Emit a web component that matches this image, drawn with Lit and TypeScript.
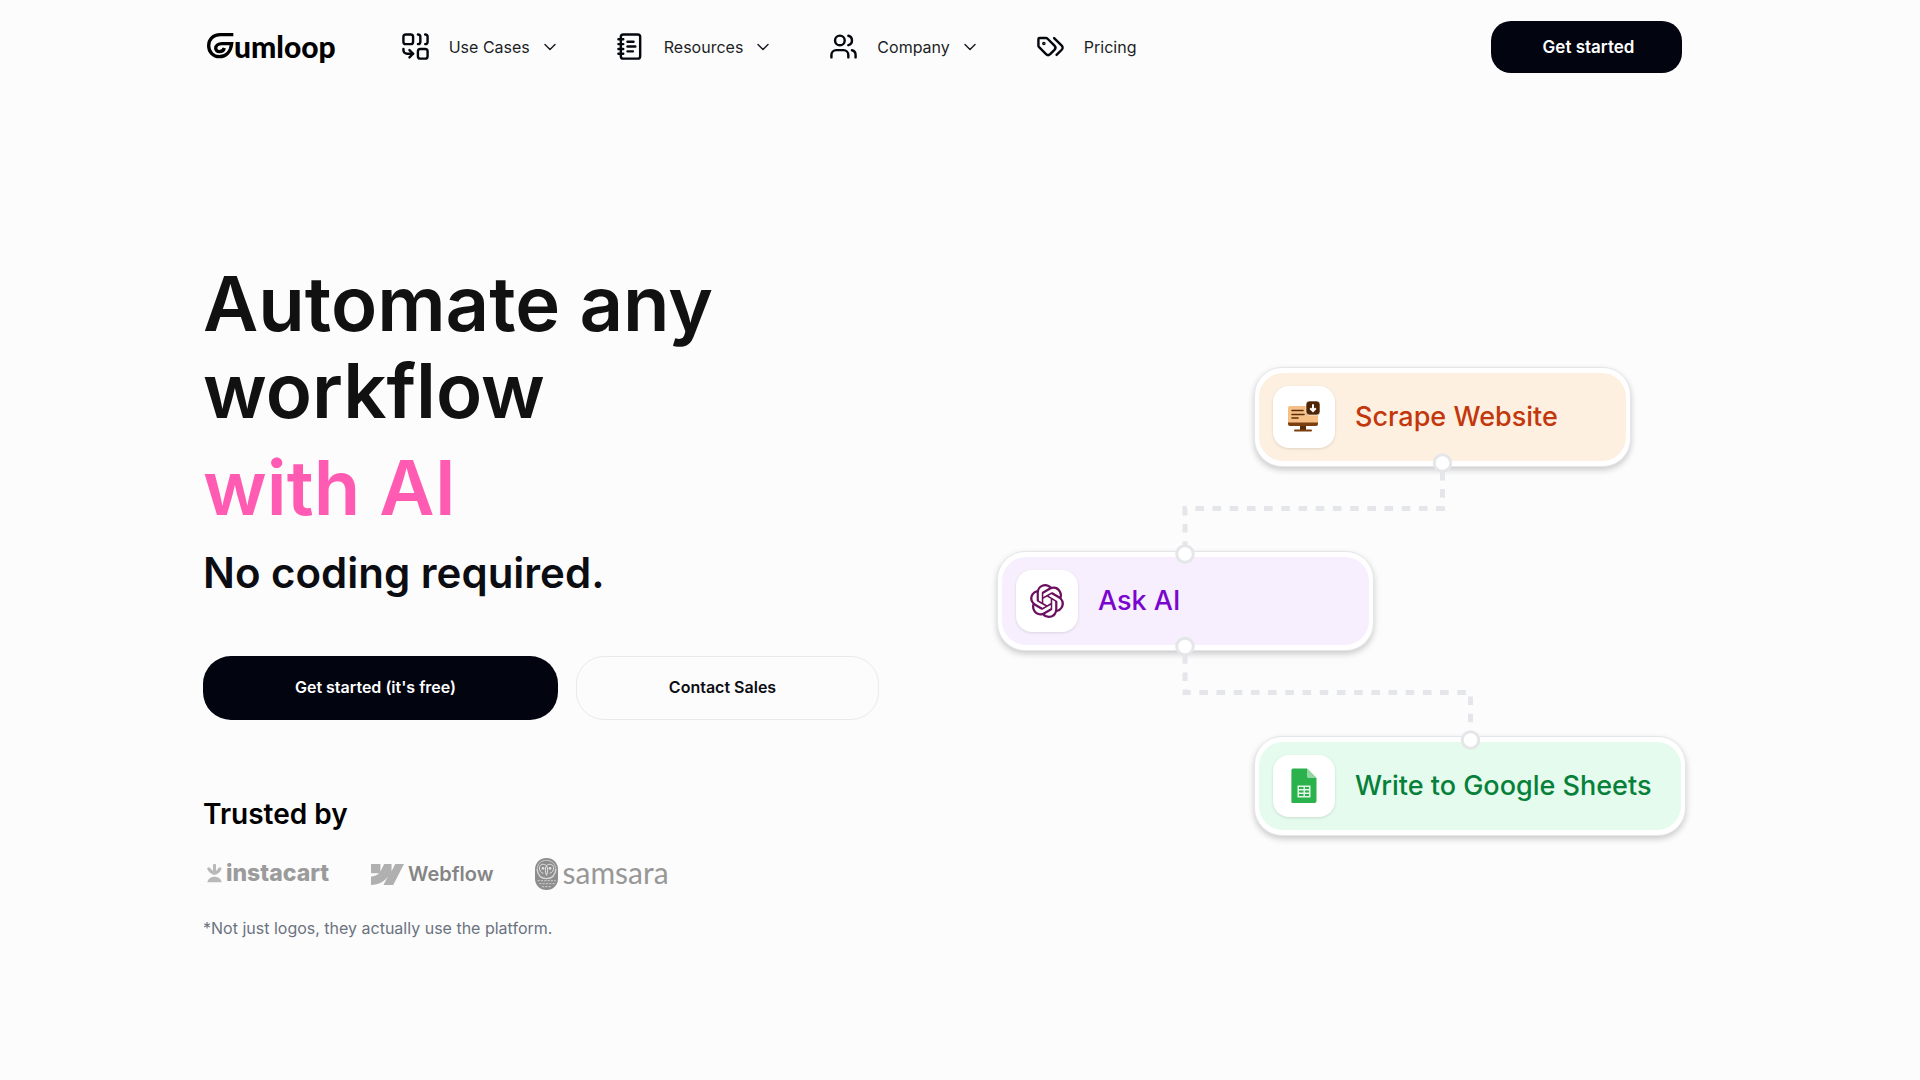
import { LitElement, html, svg, css } from "lit";
import { customElement, property } from "lit/decorators.js";

const navIcons: Record<string, unknown> = {
  combine: svg`<path d="M10 18H5a3 3 0 0 1-3-3v-1"/><path d="M14 2a2 2 0 0 1 2 2v4a2 2 0 0 1-2 2"/><path d="M20 2a2 2 0 0 1 2 2v4a2 2 0 0 1-2 2"/><path d="m7 21 3-3-3-3"/><rect x="14" y="14" width="8" height="8" rx="2"/><rect x="2" y="2" width="8" height="8" rx="2"/>`,
  notebook: svg`<path d="M2 6h4M2 10h4M2 14h4M2 18h4"/><rect width="16" height="20" x="4" y="2" rx="2"/><path d="M9.5 8h5M9.5 12H16M9.5 16H14"/>`,
  users: svg`<path d="M16 21v-2a4 4 0 0 0-4-4H6a4 4 0 0 0-4 4v2"/><circle cx="9" cy="7" r="4"/><path d="M22 21v-2a4 4 0 0 0-3-3.87"/><path d="M16 3.13a4 4 0 0 1 0 7.75"/>`,
  tags: svg`<path d="m15 5 6.3 6.3a2.4 2.4 0 0 1 0 3.4L17 19"/><path d="M9.586 5.586A2 2 0 0 0 8.172 5H3a1 1 0 0 0-1 1v5.172a2 2 0 0 0 .586 1.414L8.29 18.29a2.426 2.426 0 0 0 3.42 0l3.58-3.58a2.426 2.426 0 0 0 0-3.42z"/><circle cx="6.5" cy="9.5" r=".5" fill="currentColor"/>`,
  chevron: svg`<path d="m6 9 6 6 6-6"/>`,
};

const scrapeIcon = html`<svg width="34" height="34" viewBox="0 0 34 34" aria-hidden="true">
  <path d="M3 6h26a2 2 0 0 1 2 2v15H1V8a2 2 0 0 1 2-2z" fill="#f6bf86"/>
  <path d="M1 22.500h30v1.500a2 2 0 0 1-2 2H3a2 2 0 0 1-2-2z" fill="#7c3f10"/>
  <path d="M13 26h6v4h-6z" fill="#5a2c08"/>
  <path d="M8 30.500h16" stroke="#7c3f10" stroke-width="2" stroke-linecap="round"/>
  <path d="M5 10.500h11M5 14.500h12M5 18h6" stroke="#5a2c08" stroke-width="1.600" stroke-linecap="round"/>
  <rect x="19" y="1" width="14" height="14" rx="3.500" fill="#4d2505" stroke="#fff" stroke-width=".6"/>
  <path d="M26 4.200v6.200M23.200 8.200 26 11l2.800-2.800" fill="none" stroke="#fff" stroke-width="2"/>
</svg>`;

const aiIcon = html`<svg width="34" height="34" viewBox="0 0 24 24" fill="#6b0f5e" aria-hidden="true">
  <path d="M22.2819 9.8211a5.9847 5.9847 0 0 0-.5157-4.9108 6.0462 6.0462 0 0 0-6.5098-2.9A6.0651 6.0651 0 0 0 4.9807 4.1818a5.9847 5.9847 0 0 0-3.9977 2.9 6.0462 6.0462 0 0 0 .7427 7.0966 5.98 5.98 0 0 0 .511 4.9107 6.051 6.051 0 0 0 6.5146 2.9001A5.9847 5.9847 0 0 0 13.2599 24a6.0557 6.0557 0 0 0 5.7718-4.2058 5.9894 5.9894 0 0 0 3.9977-2.9001 6.0557 6.0557 0 0 0-.7475-7.0729zm-9.022 12.6081a4.4755 4.4755 0 0 1-2.8764-1.0408l.1419-.0804 4.7783-2.7582a.7948.7948 0 0 0 .3927-.6813v-6.7369l2.02 1.1686a.071.071 0 0 1 .038.052v5.5826a4.504 4.504 0 0 1-4.4945 4.4944zm-9.6607-4.1254a4.4708 4.4708 0 0 1-.5346-3.0137l.142.0852 4.783 2.7582a.7712.7712 0 0 0 .7806 0l5.8428-3.3685v2.3324a.0804.0804 0 0 1-.0332.0615L9.74 19.9502a4.4992 4.4992 0 0 1-6.1408-1.6464zM2.3408 7.8956a4.485 4.485 0 0 1 2.3655-1.9728V11.6a.7664.7664 0 0 0 .3879.6765l5.8144 3.3543-2.0201 1.1685a.0757.0757 0 0 1-.071 0l-4.8303-2.7865A4.504 4.504 0 0 1 2.3408 7.872zm16.5963 3.8558L13.1038 8.364 15.1192 7.2a.0757.0757 0 0 1 .071 0l4.8303 2.7913a4.4944 4.4944 0 0 1-.6765 8.1042v-5.6772a.79.79 0 0 0-.407-.667zm2.0107-3.0231l-.142-.0852-4.7735-2.7818a.7759.7759 0 0 0-.7854 0L9.409 9.2297V6.8974a.0662.0662 0 0 1 .0284-.0615l4.8303-2.7866a4.4992 4.4992 0 0 1 6.6802 4.66zM8.3065 12.863l-2.02-1.1638a.0804.0804 0 0 1-.038-.0567V6.0742a4.4992 4.4992 0 0 1 7.3757-3.4537l-.142.0805L8.704 5.459a.7948.7948 0 0 0-.3927.6813zm1.0976-2.3654l2.602-1.4998 2.6069 1.4998v2.9994l-2.5974 1.4997-2.6067-1.4997Z"/>
</svg>`;

const sheetsIcon = html`<svg width="26" height="36" viewBox="0 0 26 36" aria-hidden="true">
  <path d="M2 .5h14L25.500 10v23a2 2 0 0 1-2 2H2a1.600 1.600 0 0 1-1.600-2V2A1.600 1.600 0 0 1 2 .5z" fill="#2bb24c"/>
  <path d="M16 .5 25.500 10H17.500A1.500 1.500 0 0 1 16 8.500z" fill="#93d8a4"/>
  <path d="M6.500 17.500h13v12h-13z" fill="#e2f5e6"/>
  <path d="M8 20h4.500M14 20h4M8 23.500h4.500M14 23.500h4M8 27h4.500M14 27h4" stroke="#2bb24c" stroke-width="1.900"/>
</svg>`;

@customElement("nav-icon")
export class NavIcon extends LitElement {
  @property() name = "";
  @property({ type: Number }) size = 29;
  @property({ type: Number }) weight = 2;
  static styles = css`
    :host { display: flex; flex: none; }
    .glyph { display: block; }
  `;
  render() {
    return html`<svg class="glyph" width=${this.size} height=${this.size} viewBox="0 0 24 24" fill="none" stroke="currentColor"
      stroke-width=${this.weight} stroke-linecap="round" stroke-linejoin="round" aria-hidden="true">${navIcons[this.name]}</svg>`;
  }
}

@customElement("site-header")
export class SiteHeader extends LitElement {
  static styles = css`
    :host { display: block; }
    .bar {
      display: flex; align-items: center; gap: 65px;
      padding: 21px 238px 21px 206px;
    }
    .brand { display: flex; align-items: center; color: #000; text-decoration: none; padding-bottom: 2px; }
    .mark { display: block; }
    .word { font: 900 30px/36px Lato, "Open Sans", sans-serif; }
    .menu { display: flex; align-items: center; gap: 56px; flex: 1; }
    .item {
      display: flex; align-items: center; padding: 0; border: 0; background: none;
      font: 400 16px/24px Inter, "Liberation Sans", sans-serif; color: #1c1f26;
      text-decoration: none; cursor: pointer; white-space: nowrap;
    }
    .lead { margin: 0 19px 2px 0; color: #05070f; }
    .more { margin-left: 10px; }
    .cta {
      height: 52px; width: 191px; border: 0; border-radius: 20px; padding: 0 0 0 4px;
      background: #02040f; color: #fff; cursor: pointer;
      font: 600 17px/24px Inter, "Liberation Sans", sans-serif;
    }
  `;
  render() {
    const menus = [
      ["combine", "Use Cases"],
      ["notebook", "Resources"],
      ["users", "Company"],
    ];
    return html`<header class="bar">
      <a class="brand" href="#" aria-label="Gumloop">
        <svg class="mark" width="28" height="28" viewBox="0 0 84 84" fill="none" stroke="#000" stroke-width="10" aria-hidden="true">
          <path d="M82 8H42C21 8 8 23 8 41c0 19 14 33 32 33 20 0 34-14 37-39H48c-12 0-19 7-19 14 0 6 5 10 11 10 8 0 13-4 15-11"/>
        </svg>
        <span class="word">umloop</span>
      </a>
      <nav class="menu">
        ${menus.map(([icon, label]) => html`<button class="item" type="button">
          <nav-icon class="lead" name=${icon}></nav-icon>${label}<nav-icon class="more" name="chevron" size="20" weight="1.8"></nav-icon>
        </button>`)}
        <a class="item" href="#"><nav-icon class="lead" name="tags"></nav-icon>Pricing</a>
      </nav>
      <button class="cta" type="button">Get started</button>
    </header>`;
  }
}

@customElement("flow-canvas")
export class FlowCanvas extends LitElement {
  static styles = css`
    :host { display: block; flex: none; }
    .canvas { position: relative; width: 689px; height: 469px; }
    .node {
      position: absolute; box-sizing: border-box; width: 377px;
      padding: 5px 4px; border: 1px solid #e5e6ea; border-radius: 28px; background: #fff;
      box-shadow: 0 3px 6px rgba(0, 0, 0, 0.2);
    }
    .body {
      display: flex; align-items: center; gap: 20px; height: 88px;
      box-sizing: border-box; padding: 0 14px; border-radius: 24px;
      font: 500 27px/36px Inter, "Liberation Sans", sans-serif; white-space: nowrap;
    }
    .tile {
      display: flex; align-items: center; justify-content: center; flex: none;
      width: 62px; height: 62px; border-radius: 16px; background: #fff;
      box-shadow: 0 1px 3px rgba(0, 0, 0, 0.12);
    }
    .scrape { left: 257px; top: 1px; }
    .ask { left: 0; top: 185px; }
    .sheets { left: 257px; top: 370px; width: 432px; }
    .scrape .body { background: #fdf0e1; color: #c2370b; }
    .ask .body { background: #f7effe; color: #7a06ce; }
    .sheets .body { background: #e4fbed; color: #07803a; }
    .wires { position: absolute; inset: 0; }
  `;
  render() {
    const ports = [[445.5, 97], [188, 188], [188, 280.5], [473.5, 374]];
    return html`<div class="canvas">
      <div class="node scrape"><div class="body"><span class="tile">${scrapeIcon}</span>Scrape Website</div></div>
      <div class="node ask"><div class="body"><span class="tile">${aiIcon}</span>Ask AI</div></div>
      <div class="node sheets"><div class="body"><span class="tile">${sheetsIcon}</span>Write to Google Sheets</div></div>
      <svg class="wires" width="689" height="469" viewBox="0 0 689 469" fill="none" aria-hidden="true">
        <g stroke="#e5e6e9" stroke-width="5" stroke-dasharray="8.600 8.600">
          <path d="M445.500 105.900V142.500H188V184"/>
          <path d="M188 289.200V326.500H473.500V366"/>
        </g>
        ${ports.map(([x, y]) => svg`<circle cx=${x} cy=${y} r="8.300" fill="#fff" stroke="#e5e6ea" stroke-width="3"/>`)}
      </svg>
    </div>`;
  }
}

@customElement("customer-logos")
export class CustomerLogos extends LitElement {
  static styles = css`
    :host { display: block; }
    .row { display: flex; align-items: center; gap: 42px; padding-left: 4px; height: 32px; }
    .logo { display: flex; align-items: center; gap: 4px; white-space: nowrap; }
    .pic { display: block; flex: none; }
    .instacart { font: 800 23px/28px Inter, sans-serif; color: #9b9b9b; padding-bottom: 2px; }
    .webflow { font: 600 20px/28px Inter, sans-serif; color: #858585; }
    .samsara { font: 400 30px/28px Lato, sans-serif; color: #989898; }
    .samsara .name { padding-bottom: 4px; }
  `;
  render() {
    return html`<div class="row">
      <span class="logo instacart">
        <svg class="pic" width="15" height="19" viewBox="0 0 48 60" fill="#b9b9b9" aria-hidden="true">
          <path d="M19 4a5 5 0 0 1 10 0v18l8-10a5 5 0 0 1 8 6C42 26 34 32 24 35 14 32 6 26 2 18a5 5 0 0 1 8-6l9 10z"/>
          <path d="M1 58c2-11 11-18 23-18s21 7 23 18z"/>
        </svg>instacart</span>
      <span class="logo webflow">
        <svg class="pic" width="33" height="21" viewBox="0 0 98 62" fill="#b0b0b0" aria-hidden="true">
          <path d="M98 0 66 62H37l13-25C40 52 24 61 0 62V37s15-1 24-10H0V0h28v22L39 0h22v21L72 0z"/>
        </svg>Webflow</span>
      <span class="logo samsara">
        <svg class="pic" width="23" height="32" viewBox="0 0 69 96" aria-hidden="true">
          <rect width="69" height="96" rx="34" fill="#8d8d8d"/>
          <path d="M7 30c2-14 13-23 27-23s26 9 28 23" fill="none" stroke="#d6d6d6" stroke-width="2.500"/>
          <path d="M6 32c2 18 12 30 28.500 30S61 50 63 32" fill="none" stroke="#d9d9d9" stroke-width="4"/>
          <path d="M34.500 23C28 16 14 18 13 29c0 9 5 15 12 17M34.500 23C41 16 55 18 56 29c0 9-5 15-12 17M34.500 23c-5 8-4 20 0 29 4-9 5-21 0-29" fill="none" stroke="#e4e4e4" stroke-width="3"/>
          <circle cx="24" cy="31" r="4" fill="#e4e4e4"/><circle cx="45" cy="31" r="4" fill="#e4e4e4"/>
          <g fill="none" stroke="#c4c4c4" stroke-width="3.500" stroke-dasharray="4 6" stroke-linecap="round">
            <path d="M9 68h52M14 77h44M22 86h28"/>
          </g>
        </svg><span class="name">samsara</span></span>
    </div>`;
  }
}

@customElement("app-root")
export class AppRoot extends LitElement {
  static styles = css`
    :host {
      display: block; min-height: 100vh; background: #fcfcfc; color: #0c0d12;
      font-family: Inter, "Liberation Sans", sans-serif;
    }
    .hero {
      display: flex; align-items: center; justify-content: space-between; gap: 48px;
      padding: 166px 234px 120px 203px;
    }
    .title { margin: 0; font-weight: 600; font-size: 76px; line-height: 87px; color: #111; }
    .accent { display: block; margin-top: 10px; color: #ff5bb2; }
    .sub { margin: 17px 0 0; font-weight: 600; font-size: 42px; line-height: 50px; }
    .actions { display: flex; gap: 18px; margin-top: 58px; }
    .btn {
      box-sizing: border-box; height: 64px; border-radius: 28px; cursor: pointer;
      font: 600 16px/24px Inter, "Liberation Sans", sans-serif; padding: 0 10px 2px 0;
    }
    .primary { width: 355px; border: 0; background: #02040f; color: #fff; }
    .ghost { width: 303px; border: 1px solid #e9eaec; background: transparent; color: #0c0d12; }
    .trusted { margin: 77px 0 27px; font-weight: 600; font-size: 28px; line-height: 34px; color: #000; }
    .note { margin: 26px 0 0; font-size: 16px; line-height: 24px; color: #6b7280; }
  `;
  render() {
    return html`
      <site-header></site-header>
      <main class="hero">
        <section>
          <h1 class="title">Automate any<br>workflow<span class="accent">with AI</span></h1>
          <p class="sub">No coding required.</p>
          <div class="actions">
            <button class="btn primary" type="button">Get started (it's free)</button>
            <button class="btn ghost" type="button">Contact Sales</button>
          </div>
          <h2 class="trusted">Trusted by</h2>
          <customer-logos></customer-logos>
          <p class="note">*Not just logos, they actually use the platform.</p>
        </section>
        <flow-canvas></flow-canvas>
      </main>`;
  }
}
